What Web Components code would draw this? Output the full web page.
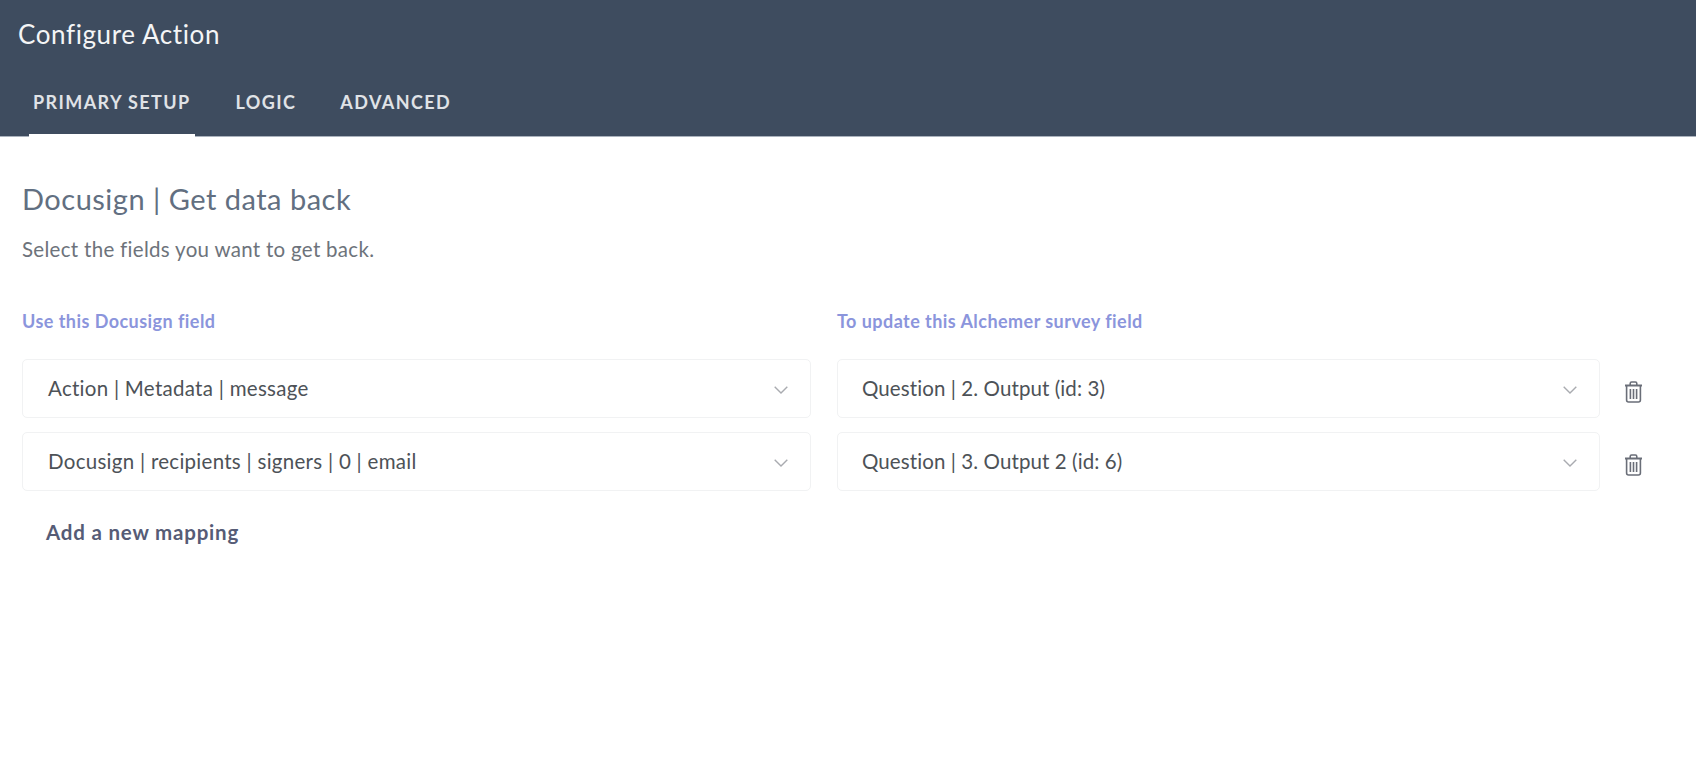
<!DOCTYPE html>
<html>
<head>
<meta charset="utf-8">
<title>Configure Action</title>
<style>
    html, body { margin: 0; padding: 0; background: #fff; }
    body { font-family: Lato, "Open Sans", sans-serif; }
</style>
</head>
<body>
<action-page></action-page>
<script>
class ActionHeader extends HTMLElement {
    constructor() {
        super();
        this.attachShadow({ mode: "open" });
        this.shadowRoot.innerHTML = `
            <style>
                :host { display: block; height: 137px; box-sizing: border-box; background: #3e4c5f; border-bottom: 1px solid #aab2bd; }
                h1 { margin: 0; padding: 19px 0 0 18px; font-size: 26px; line-height: 30px; font-weight: 400; letter-spacing: 0.6px; color: #f4f5f6; }
                nav { display: flex; margin: 37px 0 0 29px; }
            </style>
            <h1>Configure Action</h1>
            <nav><slot></slot></nav>
        `;
    }
}

class ActionTab extends HTMLElement {
    constructor() {
        super();
        this.attachShadow({ mode: "open" });
        this.shadowRoot.innerHTML = `
            <style>
                :host { display: block; height: 51px; box-sizing: border-box; padding: 4px 4px 0; margin-right: 36px; font-size: 18px; line-height: 24px; font-weight: 700; letter-spacing: 1.4px; color: #e0e3e7; }
                :host([active]) { border-bottom: 3px solid #fff; margin-right: 37px; }
            </style>
            <slot></slot>
        `;
    }
}

class MappingSelect extends HTMLElement {
    constructor() {
        super();
        this.attachShadow({ mode: "open" });
        this.shadowRoot.innerHTML = `
            <style>
                :host { display: flex; align-items: center; justify-content: space-between; box-sizing: border-box; height: 59px; padding: 0 22px 0 25px; background: #fff; border: 1px solid #f1f2f3; border-radius: 5px; font-size: 20.5px; letter-spacing: 0.28px; color: #4d5257; }
                .text { position: relative; top: -1px; }
                svg { display: block; width: 14px; height: 8px; margin-top: 2px; fill: none; stroke: #a9abb0; stroke-width: 1.4; }
            </style>
            <span class="text"><slot></slot></span>
            <svg viewBox="0 0 14 8"><path d="M0.7 0.7 L7 7 L13.3 0.7"/></svg>
        `;
    }
}

class TrashButton extends HTMLElement {
    constructor() {
        super();
        this.attachShadow({ mode: "open" });
        this.shadowRoot.innerHTML = `
            <style>
                :host { display: flex; justify-content: center; align-items: center; width: 67px; height: 59px; padding-top: 7px; box-sizing: border-box; }
                svg { display: block; width: 19px; height: 22px; fill: none; stroke: #6a6e78; stroke-width: 1.6; }
            </style>
            <svg viewBox="0 0 19 22">
                <path d="M1 4.5 H18" stroke-width="2"/>
                <path d="M6.2 4 V2.4 Q6.2 1 7.6 1 H11.4 Q12.8 1 12.8 2.4 V4"/>
                <path d="M2.6 4.5 V19 Q2.6 21 4.6 21 H14.4 Q16.4 21 16.4 19 V4.5"/>
                <path d="M6.4 8 V18 M9.5 8 V18 M12.6 8 V18"/>
            </svg>
        `;
    }
}

class MappingRow extends HTMLElement {
    constructor() {
        super();
        this.attachShadow({ mode: "open" });
        this.shadowRoot.innerHTML = `
            <style>
                :host { display: grid; grid-template-columns: 789px 763px 67px; column-gap: 26px; margin-bottom: 14px; }
                trash-button { margin-left: -26px; }
            </style>
            <slot name="source"></slot>
            <slot name="target"></slot>
            <trash-button></trash-button>
        `;
    }
}

class ActionPage extends HTMLElement {
    constructor() {
        super();
        this.attachShadow({ mode: "open" });
        this.shadowRoot.innerHTML = `
            <style>
                :host { display: block; width: 1696px; height: 772px; overflow: hidden; background: #fff; }
                main { padding: 0 22px; }
                h2 { margin: 0; padding-top: 43px; font-size: 29px; line-height: 38px; font-weight: 400; letter-spacing: 0.5px; color: #626f81; }
                p { margin: 18px 0 0; font-size: 20.5px; line-height: 26px; letter-spacing: 0.3px; color: #6d737b; }
                .labels { display: grid; grid-template-columns: 789px 763px; column-gap: 26px; margin-top: 47px; margin-bottom: 26px; font-size: 18px; line-height: 24px; font-weight: 700; letter-spacing: 0.45px; color: #8b95dc; }
                .add { padding: 14px 0 0 24px; font-size: 20.5px; line-height: 26px; font-weight: 700; letter-spacing: 0.8px; color: #565c76; }
                mapping-select[slot="target"] { padding-left: 24px; letter-spacing: 0.09px; }
            </style>
            <action-header>
                <action-tab active>PRIMARY SETUP</action-tab>
                <action-tab>LOGIC</action-tab>
                <action-tab>ADVANCED</action-tab>
            </action-header>
            <main>
                <h2>Docusign | Get data back</h2>
                <p>Select the fields you want to get back.</p>
                <div class="labels">
                    <span>Use this Docusign field</span>
                    <span>To update this Alchemer survey field</span>
                </div>
                <mapping-row>
                    <mapping-select slot="source">Action | Metadata | message</mapping-select>
                    <mapping-select slot="target">Question | 2. Output (id: 3)</mapping-select>
                </mapping-row>
                <mapping-row>
                    <mapping-select slot="source">Docusign | recipients | signers | 0 | email</mapping-select>
                    <mapping-select slot="target">Question | 3. Output 2 (id: 6)</mapping-select>
                </mapping-row>
                <div class="add">Add a new mapping</div>
            </main>
        `;
    }
}

customElements.define("action-tab", ActionTab);
customElements.define("action-header", ActionHeader);
customElements.define("mapping-select", MappingSelect);
customElements.define("trash-button", TrashButton);
customElements.define("mapping-row", MappingRow);
customElements.define("action-page", ActionPage);
</script>
</body>
</html>
